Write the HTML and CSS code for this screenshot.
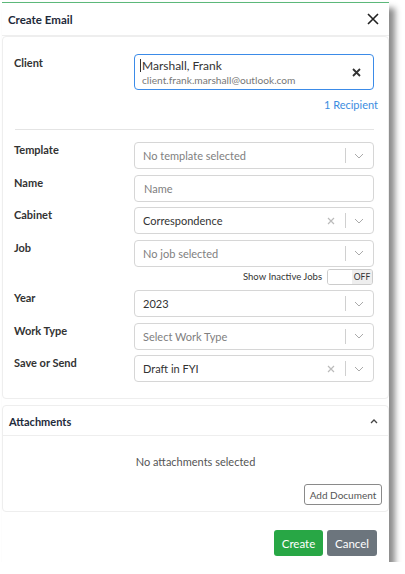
FILE: index.html
```html
<!DOCTYPE html>
<html>
<head>
<meta charset="utf-8">
<link rel="stylesheet" href="styles.css">
</head>
<body>
<div class="modal">
  <div class="modal-header">
    <span class="title">Create Email</span>
    <svg class="close" width="12" height="12" viewBox="0 0 12 12"><path d="M1 1L11 11M11 1L1 11" stroke="#222" stroke-width="1.6" fill="none"/></svg>
  </div>
  <div class="card form-card">
    <div class="row client-row">
      <label class="lbl">Client</label>
      <div class="field">
        <div class="client-box">
          <div class="client-text">
            <div class="client-name"><span class="caret"></span>Marshall, Frank</div>
            <div class="client-email">client.frank.marshall@outlook.com</div>
          </div>
          <svg class="client-x" width="9" height="9" viewBox="0 0 9 9"><path d="M1 1L8 8M8 1L1 8" stroke="#333" stroke-width="1.8" fill="none"/></svg>
        </div>
        <div class="recipient">1 Recipient</div>
      </div>
    </div>
    <div class="divider"></div>
    <div class="rows">
      <div class="row">
        <label class="lbl">Template</label>
        <div class="select"><span class="ph">No template selected</span><span class="sep"></span><svg class="chev" width="10" height="6" viewBox="0 0 10 6"><path d="M1 1L5 5L9 1" stroke="#aaa" stroke-width="1" fill="none"/></svg></div>
      </div>
      <div class="row">
        <label class="lbl">Name</label>
        <div class="select input"><span class="ph">Name</span></div>
      </div>
      <div class="row">
        <label class="lbl">Cabinet</label>
        <div class="select"><span class="val">Correspondence</span><svg class="clr" width="8" height="8" viewBox="0 0 8 8"><path d="M1 1L7 7M7 1L1 7" stroke="#bbb" stroke-width="1.2" fill="none"/></svg><span class="sep"></span><svg class="chev" width="10" height="6" viewBox="0 0 10 6"><path d="M1 1L5 5L9 1" stroke="#aaa" stroke-width="1" fill="none"/></svg></div>
      </div>
      <div class="job-group">
        <div class="row">
          <label class="lbl">Job</label>
          <div class="select"><span class="ph">No job selected</span><span class="sep"></span><svg class="chev" width="10" height="6" viewBox="0 0 10 6"><path d="M1 1L5 5L9 1" stroke="#aaa" stroke-width="1" fill="none"/></svg></div>
        </div>
        <div class="toggle-line">
          <span class="toggle-label">Show Inactive Jobs</span>
          <span class="toggle"><span class="toggle-knob"></span><span class="toggle-off">OFF</span></span>
        </div>
      </div>
      <div class="row">
        <label class="lbl">Year</label>
        <div class="select"><span class="val">2023</span><span class="sep"></span><svg class="chev" width="10" height="6" viewBox="0 0 10 6"><path d="M1 1L5 5L9 1" stroke="#aaa" stroke-width="1" fill="none"/></svg></div>
      </div>
      <div class="row">
        <label class="lbl">Work Type</label>
        <div class="select"><span class="ph">Select Work Type</span><span class="sep"></span><svg class="chev" width="10" height="6" viewBox="0 0 10 6"><path d="M1 1L5 5L9 1" stroke="#aaa" stroke-width="1" fill="none"/></svg></div>
      </div>
      <div class="row">
        <label class="lbl">Save or Send</label>
        <div class="select"><span class="val">Draft in FYI</span><svg class="clr" width="8" height="8" viewBox="0 0 8 8"><path d="M1 1L7 7M7 1L1 7" stroke="#bbb" stroke-width="1.2" fill="none"/></svg><span class="sep"></span><svg class="chev" width="10" height="6" viewBox="0 0 10 6"><path d="M1 1L5 5L9 1" stroke="#aaa" stroke-width="1" fill="none"/></svg></div>
      </div>
    </div>
  </div>
  <div class="card att-card">
    <div class="att-header">
      <span class="att-title">Attachments</span>
      <svg width="8" height="5" viewBox="0 0 8 5"><path d="M1 4L4 1L7 4" stroke="#444" stroke-width="1.3" fill="none"/></svg>
    </div>
    <div class="att-body">
      <div class="att-empty">No attachments selected</div>
      <div class="att-actions"><button class="btn-outline">Add Document</button></div>
    </div>
  </div>
  <div class="footer">
    <button class="btn btn-create">Create</button>
    <button class="btn btn-cancel">Cancel</button>
  </div>
</div>
</body>
</html>
```
FILE: styles.css
```css
* { box-sizing: border-box; }
html, body { margin: 0; padding: 0; background: #fff; }
body {
  font-family: "Lato", "Noto Sans", sans-serif;
  font-size: 11px;
  color: #333;
  padding: 2px 0 0 2px;
}
.modal {
  width: 387px;
  height: 560px;
  background: #fff;
  border-top: 1px solid #5cb87a;
  box-shadow: 6px 6px 6px rgba(0,0,0,0.45);
  display: flex;
  flex-direction: column;
}
.modal-header {
  height: 33px;
  display: flex;
  align-items: center;
  justify-content: space-between;
  padding: 0 10px 0 6px;
  border-bottom: 1px solid #eee;
}
.title { font-weight: 700; font-size: 11.5px; color: #1e2a3a; }
.card {
  border: 1px solid #eee;
  border-radius: 4px;
  background: #fff;
}
.form-card { padding: 17px 15px 15px 11px; height: 363px; }
.row {
  display: grid;
  grid-template-columns: 120px 240px;
  align-items: start;
}
.lbl { font-weight: 700; font-size: 11px; color: #333; padding-top: 1px; }
.client-row .lbl { padding-top: 2px; }
.client-box {
  height: 36px;
  border: 1px solid #3b8be8;
  border-radius: 4px;
  display: flex;
  align-items: center;
  justify-content: space-between;
  padding: 0 12px 0 5px;
}
.client-name { font-size: 12px; color: #333; line-height: 15px; display: flex; align-items: center; }
.caret { display: inline-block; width: 1px; height: 13px; background: #333; margin-right: 1px; }
.client-email { font-size: 10.2px; color: #777; line-height: 14px; padding-left: 2px; }
.recipient { text-align: right; color: #3c8de0; font-size: 11px; margin-right: -4px; margin-top: 8px; }
.divider { height: 1px; background: #e4e4e4; margin: 18px -1px 12px 1px; }
.rows { display: flex; flex-direction: column; gap: 5.5px; }
.select {
  height: 27px;
  border: 1px solid #d6d6d6;
  border-radius: 4px;
  display: flex;
  align-items: center;
  padding: 0 8px;
}
.ph { color: #808080; flex: 1; font-size: 11px; }
.input .ph { padding-left: 1px; }
.val { color: #333; flex: 1; font-size: 11px; }
.clr { margin-right: 10px; }
.sep { width: 1px; height: 15px; background: #d0d0d0; margin-right: 8px; }
.chev { margin-right: 1px; }
.job-group { display: flex; flex-direction: column; gap: 2px; }
.toggle-line { display: flex; justify-content: flex-end; align-items: center; gap: 5px; height: 16px; }
.toggle-label { font-size: 9.5px; color: #333; }
.toggle {
  width: 46px; height: 16px;
  border: 1px solid #ccc;
  border-radius: 3px;
  display: flex;
  overflow: hidden;
}
.toggle-knob { flex: 1; background: #fff; }
.toggle-off { width: 20px; background: #eee; font-size: 8.5px; color: #333; display: flex; align-items: center; justify-content: center; }
.att-card { margin-top: 6px; height: 107px; }
.att-header {
  height: 30px;
  display: flex;
  align-items: center;
  justify-content: space-between;
  padding: 2px 10px 0 6px;
  border-bottom: 1px solid #eee;
}
.att-title { font-weight: 700; font-size: 11px; color: #1e2a3a; }
.att-body { padding: 19px 6px 6px; }
.att-empty { text-align: center; color: #555; font-size: 11px; }
.att-actions { display: flex; justify-content: flex-end; margin-top: 16px; }
.btn-outline {
  font-family: inherit;
  font-size: 10px;
  color: #555;
  background: #fff;
  border: 1px solid #8a8a8a;
  border-radius: 3px;
  height: 21px;
  width: 78px;
  padding: 0;
}
.footer {
  display: flex;
  justify-content: flex-end;
  gap: 4px;
  padding: 18px 12px 0 0;
}
.btn {
  font-family: inherit;
  font-size: 11.5px;
  color: #fff;
  border: none;
  border-radius: 3px;
  height: 26px;
  padding: 0;
}
.btn-create { background: #28a745; width: 49px; }
.btn-cancel { background: #6c757d; width: 50px; }
```
